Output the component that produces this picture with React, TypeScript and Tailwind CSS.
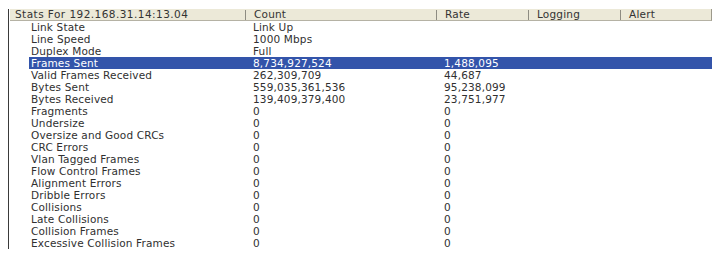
const ROWS: [string, string, string][] = [
  ['Link State', 'Link Up', ''],
  ['Line Speed', '1000 Mbps', ''],
  ['Duplex Mode', 'Full', ''],
  ['Frames Sent', '8,734,927,524', '1,488,095'],
  ['Valid Frames Received', '262,309,709', '44,687'],
  ['Bytes Sent', '559,035,361,536', '95,238,099'],
  ['Bytes Received', '139,409,379,400', '23,751,977'],
  ['Fragments', '0', '0'],
  ['Undersize', '0', '0'],
  ['Oversize and Good CRCs', '0', '0'],
  ['CRC Errors', '0', '0'],
  ['Vlan Tagged Frames', '0', '0'],
  ['Flow Control Frames', '0', '0'],
  ['Alignment Errors', '0', '0'],
  ['Dribble Errors', '0', '0'],
  ['Collisions', '0', '0'],
  ['Late Collisions', '0', '0'],
  ['Collision Frames', '0', '0'],
  ['Excessive Collision Frames', '0', '0'],
];

const SELECTED = 3;

function HeaderCell({ label, width, first }: { label: string; width: string; first?: boolean }) {
  return (
    <div className={`flex items-center h-full ${width}`}>
      {!first && <span className="w-px h-[10px] bg-[#8e8c82]" />}
      <span className={first ? 'pl-[5px] tracking-[0.45px]' : 'pl-[8px] tracking-[0.2px]'}>{label}</span>
    </div>
  );
}

export default function App() {
  return (
    <div className="w-[725px] h-[263px] bg-white pt-[9px] pl-[8px] text-[10.5px] leading-none text-[#303030] tracking-[0.15px]"
      style={{ fontFamily: '"DejaVu Sans", Verdana, sans-serif' }}>
      <div className="w-[704px] border-l border-[#3a3a3a] pl-[1px]">
        {/* Header */}
        <div className="flex h-[12px] bg-[#ece9d8] border-b border-[#b5b2a4] border-r border-r-[#9d9a8c] text-[#333]">
          <HeaderCell label="Stats For 192.168.31.14:13.04" width="w-[235px]" first />
          <HeaderCell label="Count" width="w-[191px]" />
          <HeaderCell label="Rate" width="w-[92px]" />
          <HeaderCell label="Logging" width="w-[92px]" />
          <HeaderCell label="Alert" width="flex-1" />
        </div>

        {/* Rows */}
        <div className="flex flex-col">
          {ROWS.map(([label, count, rate], i) => (
            <div key={label}
              className={`ml-[19px] h-[12px] flex items-center ${i === SELECTED ? 'bg-[#3354aa] text-white' : ''}`}>
              <span className="w-[216px] pl-[2px] whitespace-nowrap">{label}</span>
              <span className="w-[191px] pl-[8px] whitespace-nowrap">{count}</span>
              <span className="pl-[8px] whitespace-nowrap">{rate}</span>
            </div>
          ))}
        </div>
      </div>
    </div>
  );
}
